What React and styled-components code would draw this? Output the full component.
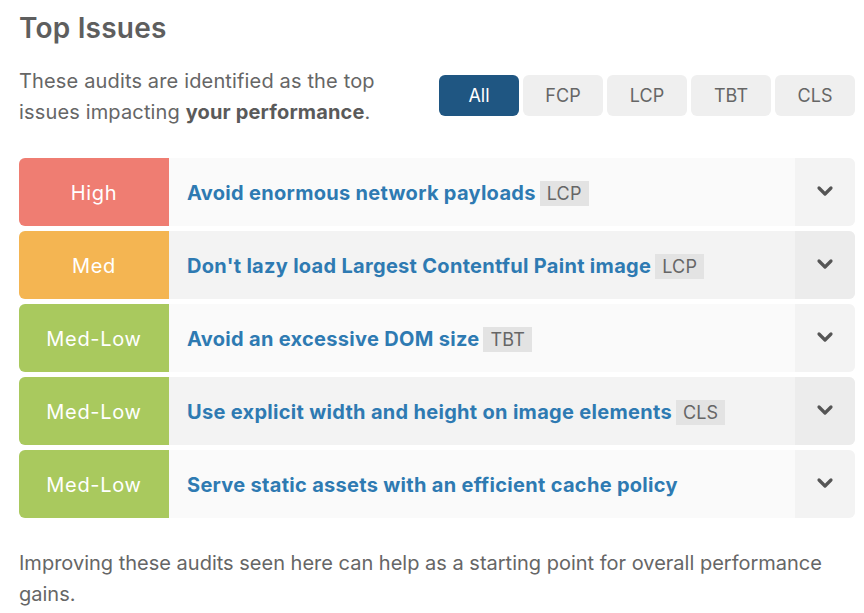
import React from "react";
import styled, { createGlobalStyle } from "styled-components";

const GlobalStyle = createGlobalStyle`
  body {
    margin: 0;
    background: #ffffff;
    font-family: Inter, "Liberation Sans", sans-serif;
  }
`;

const filters = ["All", "FCP", "LCP", "TBT", "CLS"];

const issues = [
  { level: "High", title: "Avoid enormous network payloads", tag: "LCP" },
  { level: "Med", title: "Don't lazy load Largest Contentful Paint image", tag: "LCP" },
  { level: "Med-Low", title: "Avoid an excessive DOM size", tag: "TBT" },
  { level: "Med-Low", title: "Use explicit width and height on image elements", tag: "CLS" },
  { level: "Med-Low", title: "Serve static assets with an efficient cache policy" },
];

const levelColors = {
  High: "#ef7d72",
  Med: "#f4b552",
  "Med-Low": "#a9c95e",
};

const Chevron = () => (
  <svg width="18" height="12" viewBox="0 0 18 12">
    <path
      d="M3 3 L9 9 L15 3"
      fill="none"
      stroke="#555"
      strokeWidth="3.2"
      strokeLinecap="round"
      strokeLinejoin="round"
    />
  </svg>
);

const App = () => {
  return (
    <Page>
      <GlobalStyle />
      <Title>Top Issues</Title>
      <Intro>
        <Description>
          These audits are identified as the top issues impacting{" "}
          <strong>your performance</strong>.
        </Description>
        <Filters>
          {filters.map((f, i) => (
            <FilterButton key={f} $active={i === 0}>
              {f}
            </FilterButton>
          ))}
        </Filters>
      </Intro>
      <IssueList>
        {issues.map((issue, i) => (
          <IssueRow key={issue.title} $shaded={i % 2 === 1}>
            <Level $color={levelColors[issue.level]}>{issue.level}</Level>
            <IssueTitle>
              <span>{issue.title}</span>
              {issue.tag && <Tag>{issue.tag}</Tag>}
            </IssueTitle>
            <Toggle $shaded={i % 2 === 1}>
              <Chevron />
            </Toggle>
          </IssueRow>
        ))}
      </IssueList>
      <Footer>
        Improving these audits seen here can help as a starting point for overall
        performance gains.
      </Footer>
    </Page>
  );
};

export default App;

const Page = styled.div`
  padding: 10px 9px 0 19px;
  color: #666;
`;

const Title = styled.h2`
  margin: 0;
  font-size: 28px;
  font-weight: 600;
  line-height: 36px;
  color: #5e5e5e;
  letter-spacing: 0.2px;
`;

const Intro = styled.div`
  display: flex;
  justify-content: space-between;
  align-items: flex-start;
  margin-top: 20px;
`;

const Description = styled.p`
  margin: 0;
  width: 395px;
  font-size: 20px;
  line-height: 31px;
  color: #666;
  letter-spacing: 0.15px;
  strong {
    font-weight: 700;
    color: #5a5a5a;
  }
`;

const Filters = styled.div`
  display: flex;
  gap: 4px;
  margin-top: 9px;
`;

const FilterButton = styled.button`
  width: 80px;
  height: 41px;
  border: none;
  border-radius: 6px;
  font-family: inherit;
  font-size: 18px;
  background: ${(p) => (p.$active ? "#1f5682" : "#efefef")};
  color: ${(p) => (p.$active ? "#ffffff" : "#666")};
  cursor: pointer;
`;

const IssueList = styled.div`
  display: flex;
  flex-direction: column;
  gap: 5px;
  margin-top: 30px;
`;

const IssueRow = styled.div`
  display: flex;
  height: 68px;
  border-radius: 6px;
  overflow: hidden;
  background: ${(p) => (p.$shaded ? "#f3f3f3" : "#fafafa")};
`;

const Level = styled.div`
  width: 150px;
  flex-shrink: 0;
  display: flex;
  align-items: center;
  justify-content: center;
  padding-top: 2px;
  background: ${(p) => p.$color};
  color: #fff;
  font-size: 20px;
  letter-spacing: 0.7px;
`;

const IssueTitle = styled.div`
  flex: 1;
  display: flex;
  align-items: center;
  gap: 4px;
  padding: 2px 0 0 18px;
  font-size: 20px;
  font-weight: 700;
  color: #2e7ab2;
  letter-spacing: 0.3px;
`;

const Tag = styled.span`
  background: #e3e3e3;
  color: #666;
  font-weight: 400;
  font-size: 18px;
  padding: 2px 7px;
  letter-spacing: 0.2px;
`;

const Toggle = styled.div`
  width: 60px;
  flex-shrink: 0;
  display: flex;
  align-items: center;
  justify-content: center;
  padding-bottom: 2px;
  background: ${(p) => (p.$shaded ? "#ececec" : "#f3f3f3")};
`;

const Footer = styled.p`
  margin: 30px 0 0;
  font-size: 20px;
  line-height: 31px;
  color: #666;
  letter-spacing: 0;
`;
